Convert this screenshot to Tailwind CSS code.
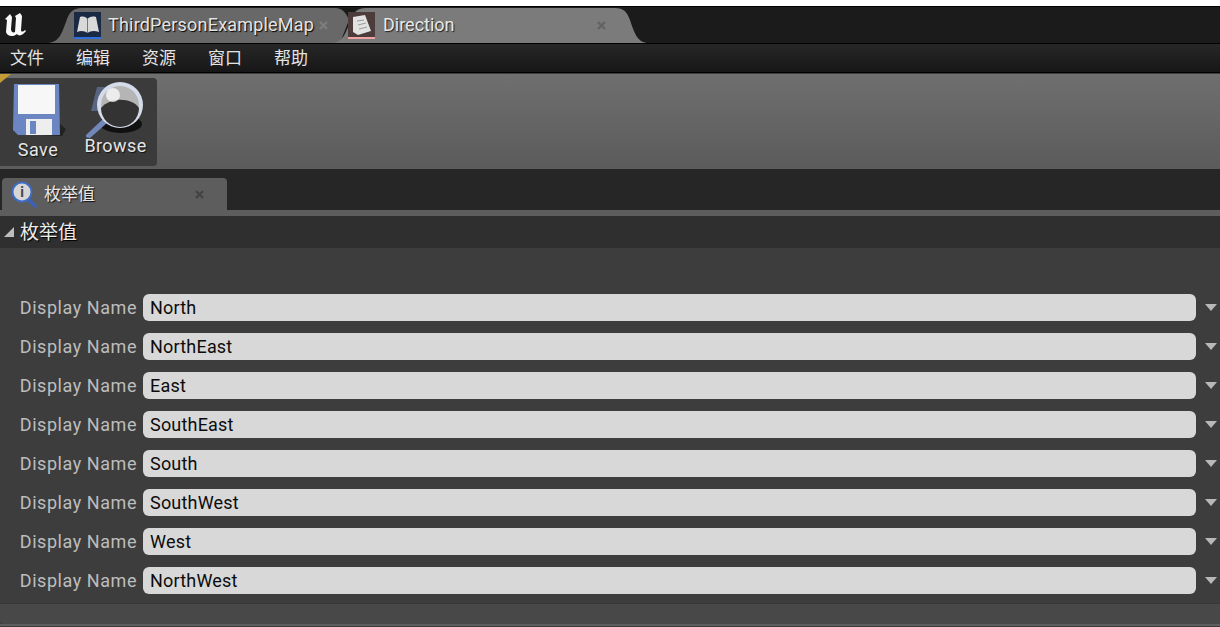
<!doctype html>
<html><head><meta charset="utf-8"><script src="https://cdn.jsdelivr.net/npm/@tailwindcss/browser@4"></script></head>
<body class="bg-[#3d3d3d]">
<div class="w-[1220px] h-[627px] overflow-hidden flex flex-col font-['Roboto','Noto_Sans_CJK_SC',sans-serif] text-[#e4e4e4]">
  <div class="h-[6px] bg-white shrink-0"></div>
  <!-- title tabs -->
  <div class="relative h-[38px] shrink-0 bg-[#1b1b1b] border-y border-black flex items-center">
    <svg class="absolute inset-0" width="1220" height="36" viewBox="0 7 1220 36">
      <path d="M48 43 C60 42 62 32 66 22 C69 13 72 8 82 8 L335 8 C343 8 346 13 349 20 L340 43Z" fill="#686868"/>
      <path d="M333 43 C343 42 346 32 350 22 C353 13 356 8 366 8 L615 8 C624 8 627 12 630 20 C634 32 637 42 647 43Z" fill="#7b7b7b"/>
    </svg>
    <svg class="relative ml-[3px]" width="27" height="24" viewBox="0 0 27 24"><path d="M2 6 L7 1 L9 4 L8 16 C8 19 10 20 12 19 L13 5 L12 3 L17 0 L19 3 L18 17 C18 19 20 19 22 17 L23 18 C20 22 16 24 14 21 C11 24 4 24 3 19 L4 7Z" fill="#fafafa"/></svg>
    <svg class="relative ml-[44px]" width="27" height="27" viewBox="0 0 27 27"><rect width="27" height="27" fill="#1b2a44"/><rect y="25" width="27" height="2" fill="#2f6fe0"/><path d="M3 20 L6 5 C10 4 12 5 13.5 7 C15 5 18 4 22 5 L25 20 C20 18 16 19 13.5 21 C11 19 7 18 3 20Z" fill="#d9d9d9"/><path d="M13.5 7V21" stroke="#777"/></svg>
    <span class="relative ml-[7px] w-[211px] text-[18px] tracking-[0.2px] leading-none [text-shadow:1px_1px_1px_#000] whitespace-nowrap">ThirdPersonExampleMap</span>
    <svg class="relative" width="9" height="9" viewBox="0 0 9 9"><path d="M1 1L8 8M8 1L1 8" stroke="#7d7d7d" stroke-width="2.4"/></svg>
    <svg class="relative ml-[20px]" width="27" height="27" viewBox="0 0 27 27"><rect width="27" height="27" fill="#4d3c3c"/><rect y="25" width="27" height="2" fill="#f0a5a5"/><path d="M5 5 L17 3 L23 19 L10 23 L5 20Z" fill="#e2e2e2"/><path d="M9 9L16 8M10 13L18 11M11 17L19 15" stroke="#999"/></svg>
    <span class="relative ml-[8px] w-[214px] text-[18px] leading-none text-[#e8e8e8] [text-shadow:1px_1px_1px_#222]">Direction</span>
    <svg class="relative" width="9" height="9" viewBox="0 0 9 9"><path d="M1 1L8 8M8 1L1 8" stroke="#636363" stroke-width="2.4"/></svg>
  </div>
  <!-- menu -->
  <div class="h-[29px] shrink-0 bg-gradient-to-b from-[#272727] to-[#171717] border-b border-black flex items-center pl-[10px] gap-[32px] text-[17px] leading-none">
    <span>文件</span><span>编辑</span><span>资源</span><span>窗口</span><span>帮助</span>
  </div>
  <!-- toolbar -->
  <div class="relative h-[95px] shrink-0 mt-px bg-gradient-to-b from-[#6f6f6f] to-[#5b5b5b] pt-[4px]">
    <div class="absolute left-0 top-0 w-0 h-0 border-t-[9px] border-t-[#c49a35] border-r-[11px] border-r-transparent"></div>
    <div class="w-[157px] h-[88px] bg-[#3b3b3b] rounded-r-[4px] flex text-[18px] leading-none text-[#e6e6e6] [text-shadow:1px_1px_1px_#111]">
      <div class="w-[75px] flex flex-col items-center pl-[1px]">
        <svg class="mt-[6px]" width="56" height="54" viewBox="0 0 56 54"><path d="M8 50 L52 52 L56 45 L50 40Z" fill="#222"/><path d="M4 0 H49 L50 51 H8 L3 46Z" fill="#6c86c4"/><rect x="8" y="1" width="37" height="29" fill="#f7f7f7"/><rect x="16" y="35" width="26" height="16" fill="#eee"/><rect x="20" y="37" width="6" height="13" fill="#6c86c4"/></svg>
        <span class="mt-[3px] tracking-[0.5px]">Save</span>
      </div>
      <div class="w-[82px] flex flex-col items-center">
        <svg class="mt-[3px] -ml-[3px]" width="64" height="58" viewBox="0 0 64 58"><ellipse cx="38" cy="43" rx="21" ry="9" fill="#111"/><path d="M8 30 H50 V6 H14Z" fill="#65789f" opacity=".7"/><path d="M3 54 L20 38 L24 42 L7 57 Q2 57 3 54Z" fill="#7288b8"/><circle cx="37" cy="24" r="23" fill="#d4dbe9"/><circle cx="37" cy="24" r="19" fill="#b5b5b5"/><path d="M18 27 A19 19 0 0 0 56 27 C50 17 28 15 18 27Z" fill="#333"/><circle cx="30" cy="14" r="7" fill="#fff" opacity=".75"/></svg>
        <span class="-mt-[2px] tracking-[0.4px] -ml-[1px]">Browse</span>
      </div>
    </div>
  </div>
  <!-- panel tab strip -->
  <div class="h-[41px] shrink-0 bg-[#262626] flex items-end pl-[2px]">
    <div class="w-[225px] h-[32px] bg-[#5d5d5d] rounded-t-[4px] flex items-center pl-[9px] text-[17px] leading-none text-[#e6e6e6] [text-shadow:1px_1px_1px_#111]">
      <svg width="27" height="27" viewBox="0 0 27 27"><path d="M17 18L24 25" stroke="#3b62b8" stroke-width="3.5" stroke-linecap="round"/><circle cx="11" cy="11" r="9.5" fill="#d7d7d7" stroke="#3f6cc7" stroke-width="2"/><text x="11" y="16" font-size="14" font-weight="700" text-anchor="middle" fill="#444" style="text-shadow:none">i</text></svg>
      <span class="ml-[6px] w-[151px]">枚举值</span>
      <svg width="9" height="9" viewBox="0 0 9 9"><path d="M1 1L8 8M8 1L1 8" stroke="#444" stroke-width="2.4"/></svg>
    </div>
  </div>
  <div class="h-[6px] shrink-0 bg-[#5d5d5d]"></div>
  <!-- section header -->
  <div class="h-[32px] shrink-0 bg-[#2f2f2f] flex items-center pl-[3px] text-[19px] leading-none text-[#ececec] [text-shadow:1px_1px_1px_#000]">
    <svg width="12" height="12" viewBox="0 0 12 12"><path d="M1 11H11V1Z" fill="#bdbdbd"/></svg>
    <span class="ml-[5px]">枚举值</span>
  </div>
  <!-- rows -->
  <div class="h-[356px] shrink-0 bg-[#3d3d3d] pt-[46px] flex flex-col gap-[12px] border-b border-[#383838] text-[18px] leading-none">
    <div class="h-[27px] flex items-center"><span class="w-[137px] text-right tracking-[0.55px] text-[#bdbdbd] whitespace-nowrap">Display Name</span><div class="ml-[6px] w-[1053px] h-[27px] rounded-[6px] bg-[#d8d8d8] text-[#0c0c0c] pl-[7px] flex items-center tracking-[0.2px]">North</div><svg class="ml-[9px]" width="12" height="8" viewBox="0 0 12 8"><path d="M0 0H12L6 7Z" fill="#b8b8b8"/></svg></div>
    <div class="h-[27px] flex items-center"><span class="w-[137px] text-right tracking-[0.55px] text-[#bdbdbd] whitespace-nowrap">Display Name</span><div class="ml-[6px] w-[1053px] h-[27px] rounded-[6px] bg-[#d8d8d8] text-[#0c0c0c] pl-[7px] flex items-center tracking-[0.2px]">NorthEast</div><svg class="ml-[9px]" width="12" height="8" viewBox="0 0 12 8"><path d="M0 0H12L6 7Z" fill="#b8b8b8"/></svg></div>
    <div class="h-[27px] flex items-center"><span class="w-[137px] text-right tracking-[0.55px] text-[#bdbdbd] whitespace-nowrap">Display Name</span><div class="ml-[6px] w-[1053px] h-[27px] rounded-[6px] bg-[#d8d8d8] text-[#0c0c0c] pl-[7px] flex items-center tracking-[0.2px]">East</div><svg class="ml-[9px]" width="12" height="8" viewBox="0 0 12 8"><path d="M0 0H12L6 7Z" fill="#b8b8b8"/></svg></div>
    <div class="h-[27px] flex items-center"><span class="w-[137px] text-right tracking-[0.55px] text-[#bdbdbd] whitespace-nowrap">Display Name</span><div class="ml-[6px] w-[1053px] h-[27px] rounded-[6px] bg-[#d8d8d8] text-[#0c0c0c] pl-[7px] flex items-center tracking-[0.2px]">SouthEast</div><svg class="ml-[9px]" width="12" height="8" viewBox="0 0 12 8"><path d="M0 0H12L6 7Z" fill="#b8b8b8"/></svg></div>
    <div class="h-[27px] flex items-center"><span class="w-[137px] text-right tracking-[0.55px] text-[#bdbdbd] whitespace-nowrap">Display Name</span><div class="ml-[6px] w-[1053px] h-[27px] rounded-[6px] bg-[#d8d8d8] text-[#0c0c0c] pl-[7px] flex items-center tracking-[0.2px]">South</div><svg class="ml-[9px]" width="12" height="8" viewBox="0 0 12 8"><path d="M0 0H12L6 7Z" fill="#b8b8b8"/></svg></div>
    <div class="h-[27px] flex items-center"><span class="w-[137px] text-right tracking-[0.55px] text-[#bdbdbd] whitespace-nowrap">Display Name</span><div class="ml-[6px] w-[1053px] h-[27px] rounded-[6px] bg-[#d8d8d8] text-[#0c0c0c] pl-[7px] flex items-center tracking-[0.2px]">SouthWest</div><svg class="ml-[9px]" width="12" height="8" viewBox="0 0 12 8"><path d="M0 0H12L6 7Z" fill="#b8b8b8"/></svg></div>
    <div class="h-[27px] flex items-center"><span class="w-[137px] text-right tracking-[0.55px] text-[#bdbdbd] whitespace-nowrap">Display Name</span><div class="ml-[6px] w-[1053px] h-[27px] rounded-[6px] bg-[#d8d8d8] text-[#0c0c0c] pl-[7px] flex items-center tracking-[0.2px]">West</div><svg class="ml-[9px]" width="12" height="8" viewBox="0 0 12 8"><path d="M0 0H12L6 7Z" fill="#b8b8b8"/></svg></div>
    <div class="h-[27px] flex items-center"><span class="w-[137px] text-right tracking-[0.55px] text-[#bdbdbd] whitespace-nowrap">Display Name</span><div class="ml-[6px] w-[1053px] h-[27px] rounded-[6px] bg-[#d8d8d8] text-[#0c0c0c] pl-[7px] flex items-center tracking-[0.2px]">NorthWest</div><svg class="ml-[9px]" width="12" height="8" viewBox="0 0 12 8"><path d="M0 0H12L6 7Z" fill="#b8b8b8"/></svg></div>
  </div>
  <div class="h-[20px] shrink-0 bg-[#484848] rounded-bl-[4px]"></div>
  <div class="h-[2px] shrink-0 bg-[#5e5e5e]"></div>
  <div class="flex-1 bg-[#3a3a3a]"></div>
</div>
</body></html>
